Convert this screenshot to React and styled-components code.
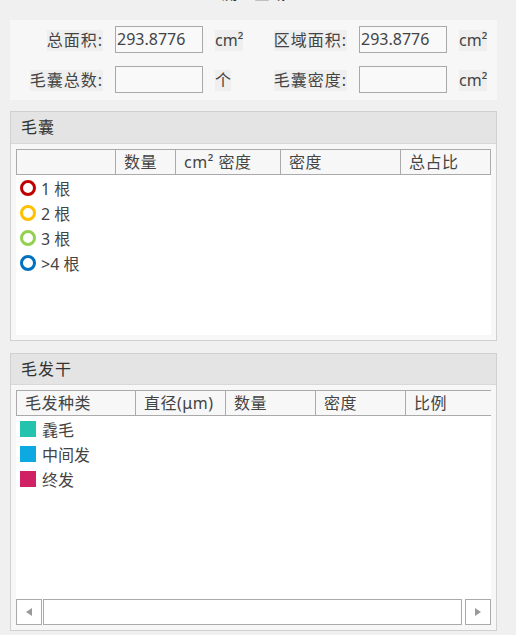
import React from 'react';
import styled, { createGlobalStyle } from 'styled-components';

const GlobalStyle = createGlobalStyle`
  html {
    overflow: hidden;
  }
  html, body {
    margin: 0;
    padding: 0;
    background: #f0f0f0;
  }
  body {
    font-family: "Noto Sans", "Noto Sans CJK SC", sans-serif;
    font-size: 16px;
    color: #444444;
  }
`

const StyledPage = styled.div`
  display: flex;
  flex-direction: column;
  width: 516px;
  height: 635px;
  padding: 0 19px 0 10px;
  box-sizing: border-box;
`

const StyledTitle = styled.div`
  flex: none;
  margin-top: -17px;
  height: 37px;
  line-height: 20px;
  text-align: center;
  color: #333333;
`

const StyledSummary = styled.div`
  display: grid;
  grid-template-columns: 93px 88px 46px 74px 88px auto;
  column-gap: 12px;
  row-gap: 13px;
  align-items: center;
  background: #f7f7f7;
  padding: 6px 0 7px 0;
`

const StyledLabelCell = styled.div`
  text-align: ${props => (props.$right ? 'right' : 'left')};
`

const StyledLabel = styled.span`
  display: inline-block;
  background: #efefef;
  line-height: 21px;
  height: 21px;
  white-space: nowrap;
  letter-spacing: ${props => (props.$cjk ? 1 : 0)}px;
`

const StyledInput = styled.div`
  height: 27px;
  box-sizing: border-box;
  border: 1px solid #a9a9a9;
  background: #f9f9f9;
  padding-left: 1px;
  line-height: 25px;
  color: #444444;
`

const StyledGroup = styled.div`
  flex: none;
  margin-top: ${props => props.$gap}px;
  border: 1px solid #d0d0d0;
  background: #f7f7f7;
`

const StyledGroupHeader = styled.div`
  height: ${props => props.$h}px;
  line-height: ${props => props.$h}px;
  background: #e4e4e4;
  border-bottom: 1px solid #d8d8d8;
  padding-left: 10px;
  color: #333333;
  letter-spacing: 1px;
`

const StyledGroupBody = styled.div`
  padding: 5px;
`

const StyledSheet = styled.div`
  height: ${props => props.$h}px;
  background: #ffffff;
  display: flex;
  flex-direction: column;
  overflow: hidden;
`

const StyledHeadRow = styled.div`
  display: flex;
  flex: none;
  height: 26px;
  box-sizing: border-box;
  border-top: 1px solid #aaaaaa;
  border-bottom: 1px solid #aaaaaa;
  background: #f7f7f7;
`

const StyledHeadCell = styled.div`
  flex: none;
  width: ${props => props.$w}px;
  box-sizing: border-box;
  border-left: 1px solid #aaaaaa;
  border-right: ${props => (props.$last ? '1px solid #aaaaaa' : 'none')};
  padding-left: 8px;
  line-height: 24px;
  white-space: nowrap;
  letter-spacing: 0.5px;
`

const StyledRow = styled.div`
  display: flex;
  flex: none;
  align-items: center;
  height: 25px;
  padding-left: 4px;
  gap: ${props => props.$gap}px;
`

const StyledRing = styled.span`
  width: 16px;
  height: 16px;
  box-sizing: border-box;
  border: 3px solid ${props => props.$color};
  border-radius: 50%;
`

const StyledSwatch = styled.span`
  width: 16px;
  height: 16px;
  background: ${props => props.$color};
`

const StyledScrollbar = styled.div`
  margin-top: auto;
  display: flex;
  height: 26px;
  flex: none;
`

const StyledScrollButton = styled.div`
  width: 26px;
  box-sizing: border-box;
  border: 1px solid #aaaaaa;
  background: #ffffff;
  display: flex;
  align-items: center;
  justify-content: center;
  margin-left: ${props => props.$ml || 0}px;
`

const StyledTrack = styled.div`
  flex: 1;
  box-sizing: border-box;
  border: 1px solid #aaaaaa;
  background: #ffffff;
  margin-left: 1px;
`

const StyledArrow = styled.span`
  width: 0;
  height: 0;
  border-top: 4px solid transparent;
  border-bottom: 4px solid transparent;
  border-${props => (props.$dir === 'left' ? 'right' : 'left')}: 6px solid #999999;
`

const follicles = [
  { label: '1 根', color: '#c00000' },
  { label: '2 根', color: '#ffc000' },
  { label: '3 根', color: '#92d050' },
  { label: '>4 根', color: '#0070c0' }
];

const shafts = [
  { label: '毳毛', color: '#24c3ae' },
  { label: '中间发', color: '#0fa9e1' },
  { label: '终发', color: '#cf2163' }
];

function App() {
  return (
    <StyledPage>
      <GlobalStyle />
      <StyledTitle>测量区域</StyledTitle>

      {/* summary fields */}
      <StyledSummary>
        <StyledLabelCell $right><StyledLabel $cjk>总面积:</StyledLabel></StyledLabelCell>
        <StyledInput>293.8776</StyledInput>
        <StyledLabelCell><StyledLabel>cm²</StyledLabel></StyledLabelCell>
        <StyledLabelCell $right><StyledLabel $cjk>区域面积:</StyledLabel></StyledLabelCell>
        <StyledInput>293.8776</StyledInput>
        <StyledLabelCell><StyledLabel>cm²</StyledLabel></StyledLabelCell>

        <StyledLabelCell $right><StyledLabel $cjk>毛囊总数:</StyledLabel></StyledLabelCell>
        <StyledInput />
        <StyledLabelCell><StyledLabel>个</StyledLabel></StyledLabelCell>
        <StyledLabelCell $right><StyledLabel $cjk>毛囊密度:</StyledLabel></StyledLabelCell>
        <StyledInput />
        <StyledLabelCell><StyledLabel>cm²</StyledLabel></StyledLabelCell>
      </StyledSummary>

      {/* follicles */}
      <StyledGroup $gap={11}>
        <StyledGroupHeader $h={31}>毛囊</StyledGroupHeader>
        <StyledGroupBody>
          <StyledSheet $h={186}>
            <StyledHeadRow>
              <StyledHeadCell $w={99} />
              <StyledHeadCell $w={60}>数量</StyledHeadCell>
              <StyledHeadCell $w={105}>cm² 密度</StyledHeadCell>
              <StyledHeadCell $w={120}>密度</StyledHeadCell>
              <StyledHeadCell $w={91} $last>总占比</StyledHeadCell>
            </StyledHeadRow>
            {follicles.map(f => (
              <StyledRow key={f.label} $gap={5}>
                <StyledRing $color={f.color} />
                {f.label}
              </StyledRow>
            ))}
          </StyledSheet>
        </StyledGroupBody>
      </StyledGroup>

      {/* hair shafts */}
      <StyledGroup $gap={12}>
        <StyledGroupHeader $h={30}>毛发干</StyledGroupHeader>
        <StyledGroupBody>
          <StyledSheet $h={235}>
            <StyledHeadRow>
              <StyledHeadCell $w={119}>毛发种类</StyledHeadCell>
              <StyledHeadCell $w={90}>直径(μm)</StyledHeadCell>
              <StyledHeadCell $w={90}>数量</StyledHeadCell>
              <StyledHeadCell $w={90}>密度</StyledHeadCell>
              <StyledHeadCell $w={120}>比例</StyledHeadCell>
            </StyledHeadRow>
            {shafts.map(s => (
              <StyledRow key={s.label} $gap={6}>
                <StyledSwatch $color={s.color} />
                {s.label}
              </StyledRow>
            ))}
            <StyledScrollbar>
              <StyledScrollButton><StyledArrow $dir="left" /></StyledScrollButton>
              <StyledTrack />
              <StyledScrollButton $ml={3}><StyledArrow $dir="right" /></StyledScrollButton>
            </StyledScrollbar>
          </StyledSheet>
        </StyledGroupBody>
      </StyledGroup>
    </StyledPage>
  );
}

export default App;
